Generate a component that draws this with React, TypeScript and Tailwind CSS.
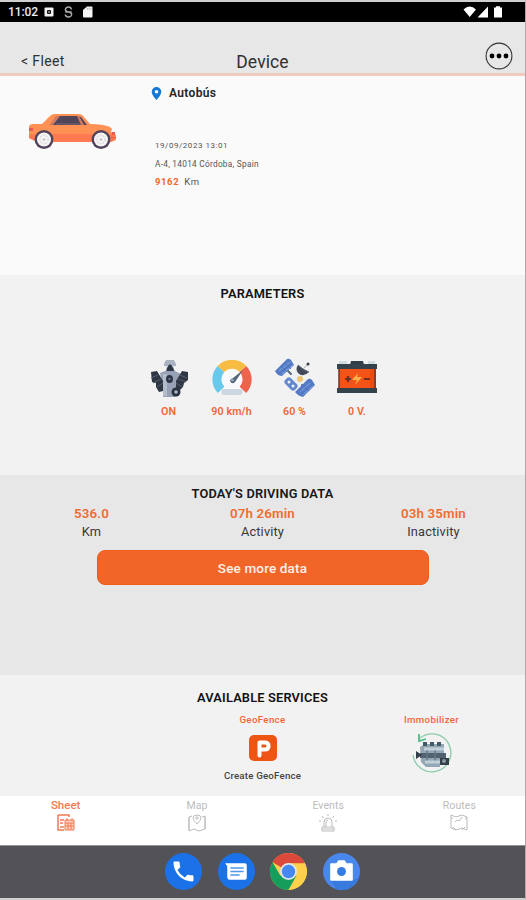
import React from "react";

function StatusBar() {
  return (
    <div className="flex h-[20px] shrink-0 items-center bg-black pl-[8px] pr-[22px] text-[12px] font-medium leading-[20px] text-[#ededed]">
      <span className="w-[36px] tracking-[-0.1px]">11:02</span>
      <svg className="h-[10px] w-[10px]" viewBox="0 0 10 10">
        <rect x=".5" y=".5" width="9" height="9" rx="1" fill="#f2f2f2" />
        <rect x="3" y="3" width="4" height="4" rx="1" fill="#111" />
        <rect x="4.3" y="4.3" width="1.4" height="1.4" fill="#ddd" />
      </svg>
      <svg className="ml-[10px] h-[12px] w-[9px]" viewBox="0 0 9 12" fill="none" stroke="#aaa" strokeWidth="1.4">
        <path d="M7.500 3.500Q7 1 4.500 1T1.300 3.500Q1.300 5.300 4.500 6T7.700 8.500Q7.300 11 4.500 11T1.200 8.500M1.300 6h6.400" />
      </svg>
      <svg className="ml-[10px] h-[12px] w-[10px]" viewBox="0 0 10 12" fill="#f5f5f5">
        <path d="M4 .5h4.500q1 0 1 1v9q0 1-1 1h-7.500q-1 0-1-1V4z" />
        <path d="M4.500 1.800v2M6.200 1.800v2M8 1.800v2" stroke="#999" strokeWidth=".6" />
      </svg>
      <svg className="ml-auto h-[12px] w-[40px]" viewBox="0 0 40 12" fill="#fff">
        <path d="M.5 3.500Q6.700-2.500 13 3.500L6.700 11zM25 .5v11H14.500zM31 1.500h2V.3h4v1.200h2v10h-8z" />
      </svg>
    </div>
  );
}

function Header() {
  return (
    <header className="grid h-[54px] shrink-0 grid-cols-3 items-end border-b-[3px] border-[#f1cbbf] bg-[#e7e7e7] text-[#303030]">
      <span className="pb-[2px] pl-[21px] text-[14px] leading-[20px] tracking-[0.38px]">&lt; Fleet</span>
      <h1 className="text-center text-[17.500px] leading-[22px] tracking-[0.1px]">Device</h1>
      <svg className="mb-[3px] mr-[12px] h-[28px] w-[28px] justify-self-end" viewBox="0 0 28 28">
        <circle cx="14" cy="14" r="12.900" fill="none" stroke="#333" strokeWidth="1.100" />
        <circle cx="7" cy="14" r="2.400" /><circle cx="14" cy="14" r="2.400" /><circle cx="21" cy="14" r="2.400" />
      </svg>
    </header>
  );
}

function Car() {
  return (
    <svg className="h-[38px] w-[90px]" viewBox="0 0 90 38">
      <path d="M1 14q1-2 4-2h9l8-8q2-2 5-2h23q4 0 6 3l6 7q13 0 20 3l2 2-1 3 5 3v5l-5 2H9l-8-4z" fill="#ff9155" />
      <path d="M1 22h86v6l-5 2H9l-8-4z" fill="#ff7a50" />
      <path d="M22 13l6-8q1-1 3-1h18l4 1 6 8z" fill="#514659" />
      <path d="M22 13L27 5q1-1 3-1h2l-7 9zM49 4h2l5 9h-3z" fill="#d17a62" />
      <path d="M28 12h25" stroke="#786373" />
      <path d="M1 16h4v3H1z" fill="#e95563" />
      <path d="M84 20h3v3h-3zM83 25h5v1h-5z" fill="#ee5a4c" />
      {[16.000, 73].map((x) => (
        <g key={x}>
          <circle cx={x} cy="27.500" r="9.400" fill="#51445a" />
          <circle cx={x} cy="27.500" r="7" fill="#f7f5f5" />
          <circle cx={x} cy="27.500" r="4.200" fill="none" stroke="#dcdadd" strokeWidth="1.400" strokeDasharray="2 1" />
          <circle cx={x} cy="27.500" r="1.500" fill="#ccc8cc" />
        </g>
      ))}
    </svg>
  );
}

function DeviceSummary() {
  return (
    <section className="flex h-[199px] shrink-0 bg-[#fafafa]">
      <div className="w-[151px] pl-[28px] pt-[36px]"><Car /></div>
      <div className="flex flex-col">
        <div className="flex h-[34px] items-center">
          <svg className="h-[13px] w-[11px]" viewBox="0 0 11 13">
            <path fillRule="evenodd" d="M5.500 0a4.800 4.800 0 0 0-4.800 4.800C.7 8.300 5.500 13 5.500 13s4.800-4.700 4.800-8.200A4.800 4.800 0 0 0 5.500 0zm0 3a1.800 1.800 0 1 1 0 3.600 1.800 1.800 0 0 1 0-3.600z" fill="#1478d4" />
          </svg>
          <span className="ml-[7px] text-[12px] font-semibold tracking-[0.35px] text-[#242424]">Autobús</span>
        </div>
        <div className="mt-[27px] pl-[4px] text-[8px] text-[#555]">
          <p className="h-[18px] leading-[18px] tracking-[0.54px]">19/09/2023 13:01</p>
          <p className="h-[18px] text-[8.300px] leading-[18px] tracking-[0.26px]">A-4, 14014 Córdoba, Spain</p>
          <p className="flex h-[18px] items-center text-[9.500px]"><b className="mr-[5px] font-bold tracking-[0.6px] text-[#f2682c]">9162</b><span className="tracking-[0.8px]">Km</span></p>
        </div>
      </div>
    </section>
  );
}

function Engine() {
  return (
    <svg className="h-[40px] w-[40px]" viewBox="0 0 40 40">
      <path d="M15 6l2-4h8l2 4v2H15z" fill="#a9b3c1" />
      <path d="M17 8h8v4h-8z" fill="#dce0e6" />
      <path d="M21 6q4 3 5 10h-9q0-7 4-10z" fill="#303848" />
      <path d="M11 15l5-2h10l6 3-3 16-3 7H14V29z" fill="#97a2b6" />
      <path d="M14 16h4v22h-4z" fill="#b4bdcb" />
      <path d="M2 14l6-1 3 5 3 5v10l-4 1-3-5v-4l-4-1zM39 14l-6-1-3 5-3 5v8l4 1 3-3 1-4 4-3z" fill="#303744" />
      <path d="M2 20l7-3M4 25l8-4M8 29l6-4M38 20l-7-3M37 24l-8-3M33 29l-6-4" stroke="#555f72" />
      <ellipse cx="20.500" cy="21" rx="3.500" ry="4" fill="#2d3646" /><circle cx="20.500" cy="21" r="1.200" fill="#64728b" />
      <circle cx="27" cy="34" r="4.500" fill="#293340" /><circle cx="27" cy="34" r="1.800" fill="#adb7c8" />
    </svg>
  );
}

function Gauge() {
  return (
    <svg className="h-[40px] w-[40px]" viewBox="0 0 40 40">
      <circle cx="20" cy="21" r="14" fill="#f8f9fa" />
      <g fill="none" strokeWidth="9">
        <path d="M9.100 31.800A15 15 0 0 1 9 11" stroke="#68c9ec" />
        <path d="M9 11A15 15 0 0 1 31 11" stroke="#f8bc43" />
        <path d="M31 11A15 15 0 0 1 30.900 31.800" stroke="#ef634c" />
      </g>
      <path d="M31 12l-8 12q-3 3-5-1 0-2 3-3z" fill="#556577" /><circle cx="20.500" cy="22" r="1.500" fill="#91a2b6" />
      <rect x="9.500" y="31" width="21" height="6" rx="3" fill="#ccd7e1" />
    </svg>
  );
}

function Satellite() {
  return (
    <svg className="h-[42px] w-[42px]" viewBox="0 0 42 42">
      <path d="M10 10l22 22" stroke="#56647d" strokeWidth="2" />
      <path d="M1 14L13 2q2-1 4 1l3 5L8 19q-3 0-5-2zM21 35l13-13q2-1 4 1l3 5-12 12q-5-1-8-5z" fill="#557ac5" />
      <path d="M5 14L16 5M8 17L19 8M26 35l10-9M29 38l10-9" stroke="#7398db" strokeWidth="1.400" />
      <path d="M7 9l6 6M11 6l6 6M29 28l6 6M25 32l6 6" stroke="#4d70b8" strokeWidth=".8" />
      <rect x="16" y="16" width="14" height="11" rx="2" transform="rotate(45 23 22)" fill="#edf0f2" />
      <rect x="10" y="23" width="14" height="8" rx="3" transform="rotate(45 17 27)" fill="#6488cd" />
      <circle cx="15" cy="25" r="1.500" fill="#eaf0ff" /><circle cx="19" cy="29" r="1.500" fill="#eaf0ff" />
      <circle cx="26" cy="22" r="3" fill="#f1c574" />
      <path d="M24 8q5 5 11 7-6 6-11 1-3-4 0-8z" fill="#424a59" /><path d="M24 8q5 5 11 7" stroke="#596375" fill="none" />
      <path d="M29 12l5-5" stroke="#a9b1be" />
      <circle cx="34" cy="7" r="1.500" fill="#353b45" />
    </svg>
  );
}

function Battery() {
  return (
    <svg className="h-[36px] w-[42px]" viewBox="0 0 42 36">
      <path d="M3 1h8v4H3zM32 1h7v4h-7z" fill="#d0dce0" />
      <path d="M14 5l1-4h12l1 4z" fill="#303e48" />
      <rect x="3" y="9" width="37" height="20" fill="#f45216" /><path d="M34 9h5v20h-5z" fill="#e94b10" />
      <path d="M1 4h40v5H1zM1 28h40v5H1z" fill="#34424c" />
      <path d="M3 9v20M39 9v20" stroke="#6f3427" strokeWidth="1.500" />
      <path d="M9 19h6M12 16v6M28 19h6" stroke="#6e3023" strokeWidth="2.200" />
      <path d="M22 13l-6 7h5l-2 5 7-8h-5z" fill="#ffb34f" />
    </svg>
  );
}

function Parameters() {
  const items = [
    { icon: <Engine />, value: "ON" },
    { icon: <Gauge />, value: "90 km/h" },
    { icon: <Satellite />, value: "60 %" },
    { icon: <Battery />, value: "0 V." },
  ];
  return (
    <section className="h-[200px] shrink-0 bg-[#f2f2f2] pt-[9px]">
      <h2 className="text-center text-[12.800px] font-semibold leading-[20px] tracking-[0.18px] text-[#111]">PARAMETERS</h2>
      <div className="mt-[53px] grid grid-cols-[63px_63px_63px_62px] justify-center">
        {items.map((item) => (
          <div key={item.value} className="flex flex-col items-center">
            <div className="flex h-[42px] items-center justify-center">{item.icon}</div>
            <span className="mt-[5px] text-[10.700px] font-semibold leading-[16px] tracking-[0.08px] text-[#ef6739]">{item.value}</span>
          </div>
        ))}
      </div>
    </section>
  );
}

function DrivingData() {
  return (
    <section className="h-[200px] shrink-0 bg-[#e7e7e7] pt-[10px]">
      <h2 className="text-center text-[12.800px] font-semibold leading-[18px] tracking-[0.18px] text-[#171717]">TODAY&apos;S DRIVING DATA</h2>
      <div className="grid grid-cols-[171px_1fr_171px] px-[6px] pt-[2px] text-center">
        {[["536.0", "Km"], ["07h 26min", "Activity"], ["03h 35min", "Inactivity"]].map(([value, label]) => (
          <div key={label}>
            <p className="text-[13.300px] font-semibold leading-[18px] tracking-[0.15px] text-[#ef6c32]">{value}</p>
            <p className="text-[12.800px] leading-[18px] tracking-[0.15px] text-[#383838]">{label}</p>
          </div>
        ))}
      </div>
      <button className="mx-auto mt-[9px] block h-[35px] w-[332px] rounded-[8px] border border-[#ef5b1a] bg-[#f16529] pt-[1px] text-[13.500px] font-medium leading-[33px] tracking-[0.15px] text-[#fff1e8]">See more data</button>
    </section>
  );
}

function Immobilizer() {
  return (
    <svg className="h-[42px] w-[42px]" viewBox="0 0 42 42">
      <path d="M9 5A19 19 0 1 1 2 22" fill="none" stroke="#8ccbaa" strokeWidth="1.300" />
      <path d="M8 1v7l7-2" fill="none" stroke="#55bb84" strokeWidth="1.800" />
      <path d="M9 14l5-3h19v18h-4v5H15l-5-5z" fill="#93a6b5" />
      <path d="M12 9h4v4h-4zM19 9h4v4h-4zM26 9h4v4h-4z" fill="#465966" />
      <path d="M9 20h26v5H9z" fill="#526170" />
      <path d="M16 16v14M24 16v14" stroke="#677986" strokeWidth="1.500" />
      <path d="M13 16h20M14 29h16" stroke="#c1cfd9" strokeWidth="3" />
      <path d="M5 18l6 4-6 4zM29 25h9v7h-9z" fill="#344049" /><circle cx="33" cy="28" r="2" fill="#8799a5" />
    </svg>
  );
}

function Services() {
  return (
    <section className="h-[121px] shrink-0 bg-[#f2f2f2] pt-[14px]">
      <h2 className="text-center text-[12.800px] font-semibold leading-[18px] tracking-[0.18px] text-[#111]">AVAILABLE SERVICES</h2>
      <div className="grid grid-cols-[178px_169px_169px] pt-[4px] text-center">
        <div className="col-start-2 flex flex-col items-center">
          <span className="text-[9.700px] font-medium leading-[17px] tracking-[0.35px] text-[#ef6539]">GeoFence</span>
          <svg className="mt-[6px] h-[28px] w-[30px]" viewBox="0 0 30 28">
            <rect x="1" y="1" width="28" height="26" rx="5" fill="#ee5413" />
            <path d="M11.500 21.500V8.500H17q3.500 0 3.500 3.500T17 15.500h-4" fill="none" stroke="#fff" strokeWidth="4" strokeLinecap="round" strokeLinejoin="round" />
          </svg>
          <span className="mt-[5px] text-[9.700px] font-medium leading-[17px] tracking-[0.2px] text-[#444]">Create GeoFence</span>
        </div>
        <div className="flex flex-col items-center">
          <span className="text-[9.700px] font-medium leading-[17px] tracking-[0.35px] text-[#ef6539]">Immobilizer</span>
          <div className="mt-[5px]"><Immobilizer /></div>
        </div>
      </div>
    </section>
  );
}

function TabIcon({ name }: { name: string }) {
  return (
    <svg className="h-[20px] w-[20px]" viewBox="0 0 20 20" fill="none" stroke="currentColor" strokeWidth="1">
      {name === "Sheet" && <>
        <path d="M2 2h11v2M2 2v15h6M4 7h4M4 10h3M4 14h4" strokeWidth="1.500" />
        <path d="M9 7h9v10H9z" fill="#fbd1c2" />
        <path d="M9 10h9M12 10v7M15 10v7M9 13h9M11 5v3M16 5v3" />
      </>}
      {name === "Map" && <>
        <path d="M5 3l-3 1v14l5-2 5 2 6-2V3l-3 1M2 4v13M18 4v12" />
        <path d="M10 11Q6 7 6 5q0-3 4-3t4 3q0 2-4 6z" /><circle cx="10" cy="5" r="1.200" />
      </>}
      {name === "Events" && <>
        <path d="M4 14h12v4H4zM6 14V9q0-4 4-4t4 4v5M8 14v-4q0-3 2-3M10 1v2M4 3l1.500 2M16 3l-1.500 2M1 8h2M17 8h2M4 16h12" />
      </>}
      {name === "Routes" && <>
        <path d="M2 2l5 2 6-2 5 2v13l-5-2-6 2-5-2zM2 4l2 2M18 4l-2 2M4 14l3 3M16 14l-3 3M6 9l2-2 2 1 3-4" />
      </>}
    </svg>
  );
}

function TabBar() {
  return (
    <nav className="grid h-[49px] shrink-0 grid-cols-[131.300px_131.300px_131.300px_131px] bg-white">
      {["Sheet", "Map", "Events", "Routes"].map((name) => (
        <div key={name} className={name === "Sheet" ? "flex flex-col items-center pt-[1px] text-[11.500px] font-medium leading-[16px] text-[#f27b53]" : "flex flex-col items-center pt-[2px] text-[10.500px] leading-[15px] tracking-[0.08px] text-[#bcbcbc]"}>
          <span>{name}</span><TabIcon name={name} />
        </div>
      ))}
    </nav>
  );
}

function Dock() {
  return (
    <div className="flex h-[53px] shrink-0 items-center justify-center gap-[15.500px] border-t border-[#939393] bg-[#535256] pb-[2px]">
      <svg className="h-[37px] w-[37px]" viewBox="0 0 36 36">
        <circle cx="18" cy="18" r="18" fill="#1b72e8" />
        <path transform="translate(5 5) scale(1.080)" fill="#fff" d="M6.620 10.790a15.050 15.050 0 0 0 6.590 6.590l2.200-2.200a1 1 0 0 1 1.020-.24 11.360 11.360 0 0 0 3.570.57 1 1 0 0 1 1 1V20a1 1 0 0 1-1 1A17 17 0 0 1 3 4a1 1 0 0 1 1-1h3.500a1 1 0 0 1 1 1c0 1.250.2 2.450.57 3.570a1 1 0 0 1-.25 1.020z" />
      </svg>
      <svg className="h-[37px] w-[37px]" viewBox="0 0 36 36">
        <circle cx="18" cy="18" r="18" fill="#1b72e8" />
        <path d="M7 10h19q2 0 2 2v12q0 2-2 2H12q-3 0-3-3V13z" fill="#fff" />
        <path d="M12 14.500h13M12 18h13M12 21.500h9" stroke="#5396ed" strokeWidth="1.500" />
      </svg>
      <svg className="h-[37px] w-[37px]" viewBox="0 0 36 36">
        <circle cx="18" cy="18" r="18" fill="#fbd04b" />
        <path d="M18 18L2.400 9A18 18 0 0 1 34 10z" fill="#dc493a" />
        <path d="M2.400 9A18 18 0 0 0 18 36l8-14-8-4-8 4z" fill="#159e5b" />
        <path d="M18 36a18 18 0 0 0 16-26H18l8 12z" fill="#ffd04b" />
        <circle cx="18" cy="18" r="8.300" fill="#dfe5e8" /><circle cx="18" cy="18" r="6.500" fill="#4687f1" />
      </svg>
      <svg className="h-[37px] w-[37px]" viewBox="0 0 36 36">
        <circle cx="18" cy="18" r="18" fill="#4a87ed" />
        <path d="M7 27h21l7-3a18 18 0 0 1-21 12z" fill="#397bdd" />
        <path d="M8 10h5l2-3h6l2 3h5q1 0 1 1v15q0 1-1 1H8q-1 0-1-1V11q0-1 1-1z" fill="#fff" />
        <circle cx="18" cy="18" r="4.300" fill="#347be4" />
      </svg>
    </div>
  );
}

export default function App() {
  return (
    <main className="h-[900px] w-[526px] overflow-hidden border-y-2 border-r border-y-[#cfcfcf] border-r-[#a9a9a9] bg-[#fafafa] font-['Roboto','Liberation_Sans',sans-serif]">
      <div className="flex h-[896px] flex-col">
        <StatusBar />
        <Header />
        <DeviceSummary />
        <Parameters />
        <DrivingData />
        <Services />
        <TabBar />
        <Dock />
      </div>
    </main>
  );
}
